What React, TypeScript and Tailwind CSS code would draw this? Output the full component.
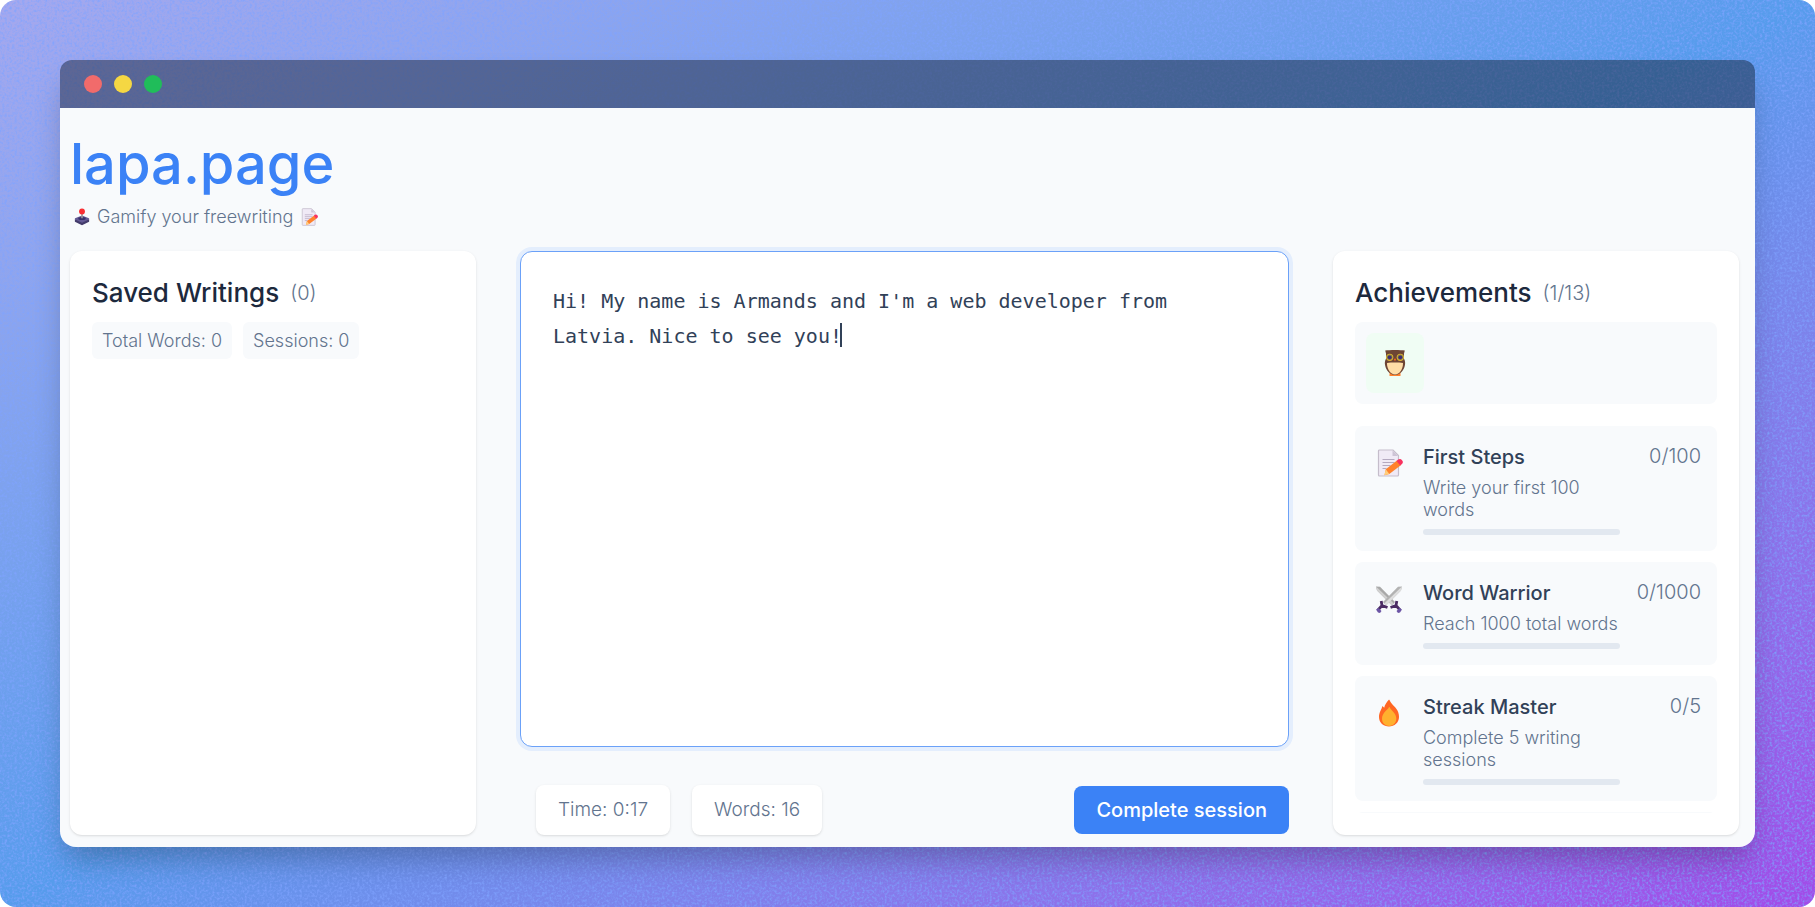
import { useState } from "react";
import type { ReactNode } from "react";

function MemoIcon({ className }: { className: string }) {
  return (
    <svg viewBox="-2 0 28 28" className={className} aria-hidden="true">
      <path d="M2.500 1h13.500l5.500 5.500V26a1 1 0 0 1-1 1h-18a1 1 0 0 1-1-1V2a1 1 0 0 1 1-1z" fill="#f0eaf6" stroke="#c5bdcb" strokeWidth="1.200" />
      <path d="M15.500 1.500v5.500h5.500z" fill="#cdc4d6" />
      <path d="M5.500 10.500h12M5.500 13.500h12M5.500 16.500h8M5.500 19.500h4" stroke="#b5a9c1" strokeWidth="1.100" />
      <path d="M8.800 20.300 20 11.500l3.800 4.800-11.500 8.700-4.800 1.200z" fill="#ff822d" />
      <path d="m8.800 20.300 3.500 4.700-5 1.200z" fill="#ffce7c" />
      <path d="m19.500 11.900 1.600-1.300a3 3 0 0 1 3.900 4.500l-1.800 1.500z" fill="#f8315f" />
    </svg>
  );
}

function JoystickIcon({ className }: { className: string }) {
  return (
    <svg viewBox="0 0 18 20" className={className} aria-hidden="true">
      <path d="M1 12.500v2.800L9 19.400l8-4.100v-2.800z" fill="#433b6b" />
      <path d="M9 8.200 1.200 11.500c-.5.500-.5 1 0 1.400L9 16.600l7.800-3.700c.5-.4.500-.9 0-1.400z" fill="#635994" />
      <ellipse cx="9" cy="11.600" rx="4.200" ry="1.700" fill="#37306b" />
      <path d="M8.100 6h1.800v5.500H8.100z" fill="#9b9b9b" />
      <circle cx="9" cy="3.800" r="3.300" fill="#f92f33" />
    </svg>
  );
}

function OwlIcon({ className }: { className: string }) {
  return (
    <svg viewBox="0 0 22 28" className={className} aria-hidden="true">
      <path d="M5.500 23h11v4h-11z" fill="#ff822d" />
      <path d="M1.200 1.500C5 .8 17 .8 20.800 1.500L20 4.500v5.300c1.200 2 1.400 4.200.9 6.400C20 21.500 15.500 26 11 26S2 21.500 1.100 16.200c-.5-2.200-.3-4.400.9-6.400V4.500z" fill="#6d4534" />
      <path d="M3 14c4.500-.6 11.500-.6 16 0C19.200 20 15.500 25.500 11 25.500S2.800 20 3 14z" fill="#ffdea7" />
      <circle cx="5.700" cy="8.300" r="3.600" fill="#e0b436" />
      <circle cx="16.300" cy="8.300" r="3.600" fill="#e0b436" />
      <circle cx="5.700" cy="8.300" r="2.700" fill="#83803c" />
      <circle cx="16.300" cy="8.300" r="2.700" fill="#83803c" />
      <circle cx="5.700" cy="8.300" r="1.900" fill="#402a75" />
      <circle cx="16.300" cy="8.300" r="1.900" fill="#402a75" />
      <path d="M9.800 9.800h2.400L11 12.600z" fill="#ff6723" />
    </svg>
  );
}

function SwordsIcon({ className }: { className: string }) {
  return (
    <svg viewBox="0 0 28 28" className={className} aria-hidden="true">
      <path d="m1 1.500 4 .3L20 17l-3 3.500L2 5.500z" fill="#a8a8a8" />
      <path d="m1 1.500 17.800 17-1.800 2L2 5.500z" fill="#d0d0d0" />
      <path d="m27 1.500-4 .3L8 17l3 3.500L26 5.500z" fill="#b2b2b2" />
      <path d="M27 1.500 9.300 18.500l1.700 2L26 5.500z" fill="#dedede" />
      <path d="M6.200 16 7 20.500l5.500 2M7 20.500 3 25M21.800 16l-.8 4.500-5.500 2M21 20.500l4 4.500" fill="none" stroke="#4b2c63" strokeWidth="2.800" />
      <path d="m1 24.500 2.500-1.500 3 3-1.500 2-2-.5zM27 24.500l-2.500-1.500-3 3 1.500 2 2-.5z" fill="#6c55a5" />
    </svg>
  );
}

function FireIcon({ className }: { className: string }) {
  return (
    <svg viewBox="-3 0 28 28" className={className} aria-hidden="true">
      <path d="M20.300 13.500C18.500 8 14 6.500 11.500 1c-.2-.4-.6-.4-.9-.1C9 3 6.700 5.200 6.200 8.800L4.700 7.300c-.2-.2-.5-.1-.5.200C3.700 10.500 1 13 1 18c0 5.800 4.500 9.500 10 9.500S21 23.500 21 18c0-1.600-.2-3-.7-4.500z" fill="#ff6723" />
      <path d="M11.600 8.300c-.2-.4-.6-.3-.7 0-.8 2.200-6.900 5.500-6.900 11.300 0 4.700 3.300 7.400 7.300 7.400s7-3 7-7.400c0-5.400-5-7.600-6.700-11.300z" fill="#ffb02e" />
    </svg>
  );
}

function Grain() {
  return (
    <svg className="pointer-events-none absolute inset-0 h-full w-full" aria-hidden="true">
      <filter id="grain" x="0" y="0" width="100%" height="100%" colorInterpolationFilters="sRGB">
        <feTurbulence type="fractalNoise" baseFrequency="0.4" numOctaves="2" seed="4" />
        <feColorMatrix values="0 0 0 0 0.500  0 0 0 0 0.640  0 0 0 0 1  2 0 0 0 -0.850" />
      </filter>
      <rect width="100%" height="100%" filter="url(#grain)" />
    </svg>
  );
}

type Goal = { name: string; detail: string; count: string; icon: ReactNode };

const goals: Goal[] = [
  { name: "First Steps", detail: "Write your first 100 words", count: "0/100", icon: <MemoIcon className="size-7" /> },
  { name: "Word Warrior", detail: "Reach 1000 total words", count: "0/1000", icon: <SwordsIcon className="size-7" /> },
  { name: "Streak Master", detail: "Complete 5 writing sessions", count: "0/5", icon: <FireIcon className="size-7" /> },
];

function GoalRow({ name, detail, count, icon }: Goal) {
  return (
    <li className="flex shrink-0 rounded-lg bg-slate-50 pt-[17px] pr-4 pb-4 pl-5">
      <div className="w-12 shrink-0 pt-[6px]">{icon}</div>
      <div className="min-w-0 flex-1">
        <h3 className="text-xl leading-7 font-medium text-slate-700">{name}</h3>
        <p className="mt-[6px] text-lg leading-[22px] font-light text-slate-500">{detail}</p>
        <div className="mt-2 h-[6px] rounded-full bg-slate-200" />
      </div>
      <span className="ml-4 w-[65px] shrink-0 text-right text-xl leading-[26px] font-light text-slate-500">{count}</span>
    </li>
  );
}

function PanelTitle({ title, count }: { title: string; count: string }) {
  return (
    <h2 className="flex items-center gap-[11px] text-[26px] leading-10 font-medium text-slate-800">
      {title}
      <span className="text-xl font-light text-slate-500">{count}</span>
    </h2>
  );
}

export default function App() {
  const [text, setText] = useState("Hi! My name is Armands and I'm a web developer from Latvia. Nice to see you!");
  return (
    <div className="bg-white font-['Inter',sans-serif]">
      <div className="relative flex h-screen flex-col overflow-hidden rounded-2xl bg-linear-to-br from-[#a5a8ee] via-[#569cec] to-[#a24ae8] p-[60px]">
        <Grain />
        <div className="relative flex min-h-0 flex-1 flex-col rounded-2xl shadow-[0_18px_30px_-6px_rgba(0,0,0,0.25)]">
          <header className="flex h-12 shrink-0 items-center gap-3 rounded-t-xl bg-gray-900/45 px-6">
            <span className="size-[18px] rounded-full bg-[#f16b6b]" />
            <span className="size-[18px] rounded-full bg-[#f5d743]" />
            <span className="size-[18px] rounded-full bg-[#20bd5a]" />
          </header>
          <main className="flex min-h-0 flex-1 flex-col rounded-b-2xl bg-slate-50 pt-6 pr-4 pb-3 pl-[10px]">
            <h1 className="text-[56px] leading-[64px] font-medium text-[#3b82f6]">lapa.page</h1>
            <p className="mt-[9px] flex items-center gap-[7px] pl-1 text-lg leading-6 font-light text-slate-500">
              <JoystickIcon className="h-[18px] w-4" />
              Gamify your freewriting
              <MemoIcon className="size-[18px]" />
            </p>
            <div className="mt-[22px] grid min-h-0 flex-1 grid-cols-[406fr_769fr_406fr] gap-11">
              <section className="rounded-xl bg-white p-[22px] shadow">
                <PanelTitle title="Saved Writings" count="(0)" />
                <div className="mt-[9px] flex gap-[11px] text-lg leading-[37px] font-light text-slate-500">
                  <span className="rounded-md bg-slate-50 px-[10px]">Total Words: 0</span>
                  <span className="rounded-md bg-slate-50 px-[10px]">Sessions: 0</span>
                </div>
              </section>

              <section className="flex min-h-0 flex-col">
                <div className="relative min-h-0 flex-1">
                  <textarea
                    aria-label="Freewriting"
                    spellCheck={false}
                    value={text}
                    onChange={(e) => setText(e.target.value)}
                    className="block h-full w-full resize-none rounded-xl border border-[#6ba1f8] bg-white px-8 pt-8 font-['DejaVu_Sans_Mono',monospace] text-xl leading-[35px] text-slate-700 ring-4 ring-blue-500/10 outline-none"
                  />
                  <span className="absolute top-[72px] left-[320px] h-6 w-0.5 bg-slate-700" />
                </div>
                <div className="mt-[38px] flex items-center gap-[22px] pl-4 text-[19px] leading-[50px] font-light text-slate-500">
                  <span className="rounded-lg bg-white px-[22px] shadow-sm">Time: 0:17</span>
                  <span className="rounded-lg bg-white px-[22px] shadow-sm">Words: 16</span>
                  <button type="button" className="ml-auto h-12 rounded-lg bg-[#3b82f6] px-[22px] text-xl font-medium text-white">
                    Complete session
                  </button>
                </div>
              </section>

              <section className="flex min-h-0 flex-col rounded-xl bg-white p-[22px] shadow">
                <PanelTitle title="Achievements" count="(1/13)" />
                <div className="mt-[9px] flex shrink-0 rounded-lg bg-slate-50 p-[11px]">
                  <div className="flex h-[60px] w-[58px] items-center justify-center rounded-lg bg-green-50">
                    <OwlIcon className="h-7 w-[22px]" />
                  </div>
                </div>
                <ul className="mt-[22px] flex min-h-0 flex-1 flex-col gap-[11px] overflow-hidden">
                  {goals.map((g) => (
                    <GoalRow key={g.name} {...g} />
                  ))}
                  <li className="h-6 shrink-0 rounded-lg bg-slate-50" />
                </ul>
              </section>
            </div>
          </main>
        </div>
      </div>
    </div>
  );
}
